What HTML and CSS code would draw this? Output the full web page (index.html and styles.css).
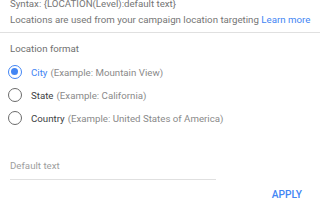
FILE: index.html
```html
<!DOCTYPE html>
<html lang="en">
  <head>
    <meta charset="utf-8">
    <title>Location</title>
    <link rel="stylesheet" href="styles.css">
  </head>
  <body>

    <div class="loc-panel">
      <div class="loc-panel__info">
        <p class="loc-panel__syntax">Syntax: {LOCATION(Level):default text}</p>
        <p class="loc-panel__note">Locations are used from your campaign location targeting <a href="#" class="loc-panel__link">Learn more</a></p>
      </div>

      <div class="loc-panel__body">
        <div class="loc-panel__label">Location format</div>

        <label class="radio is-checked">
          <span class="radio__circle"></span>
          <span class="radio__name">City</span>
          <span class="radio__hint">(Example: Mountain View)</span>
        </label>
        <label class="radio">
          <span class="radio__circle"></span>
          <span class="radio__name">State</span>
          <span class="radio__hint">(Example: California)</span>
        </label>
        <label class="radio">
          <span class="radio__circle"></span>
          <span class="radio__name">Country</span>
          <span class="radio__hint">(Example: United States of America)</span>
        </label>

        <div class="loc-panel__field">Default text</div>
      </div>

      <div class="loc-panel__actions">
        <button class="loc-panel__apply">APPLY</button>
      </div>
    </div>

  </body>
</html>
```

FILE: styles.css
```css
body {
  margin: 0;
  background: #fff;
  font-family: Roboto, "Liberation Sans", sans-serif;
  font-size: 9.7px;
  color: #757575;
}

.loc-panel__info {
  padding: 0 10px 4px;
  border-bottom: 1px solid #e0e0e0;
  margin-top: -4px;
}

.loc-panel__info p {
  margin: 0;
  line-height: 16px;
  white-space: nowrap;
}

.loc-panel__link {
  color: #4285f4;
  text-decoration: none;
}

.loc-panel__body { padding: 8px 10px 0; }

.loc-panel__label {
  line-height: 16px;
  margin-bottom: 3.5px;
  color: #6f6f6f;
}

.radio {
  display: flex;
  align-items: center;
  height: 23px;
  margin-left: -2px;
}

.radio__circle {
  box-sizing: border-box;
  width: 14px; height: 14px;
  border: 1.5px solid #6b6b6b;
  border-radius: 50%;
  margin-right: 9px;
  position: relative;
}

.radio.is-checked .radio__circle { border-color: #4285f4; }

.radio.is-checked .radio__circle::after {
  content: "";
  position: absolute;
  left: 2px; top: 2px;
  width: 7px; height: 7px;
  border-radius: 50%;
  background: #4285f4;
}

.radio__name {
  color: #3c4043;
  margin-right: 3px;
}

.radio.is-checked .radio__name { color: #4285f4; }

.radio__hint { color: #8a8a8a; }

.loc-panel__field {
  width: 206px;
  margin-top: 28.5px;
  padding-bottom: 5px;
  border-bottom: 1px solid #e0e0e0;
  line-height: 16px;
  color: #9e9e9e;
}

.loc-panel__actions {
  display: flex;
  justify-content: flex-end;
  padding: 7px 18px 0 0;
}

.loc-panel__apply {
  border: 0;
  background: none;
  padding: 0;
  font: 500 10.2px Roboto, "Liberation Sans", sans-serif;
  color: #4285f4;
  line-height: 16px;
}
```
